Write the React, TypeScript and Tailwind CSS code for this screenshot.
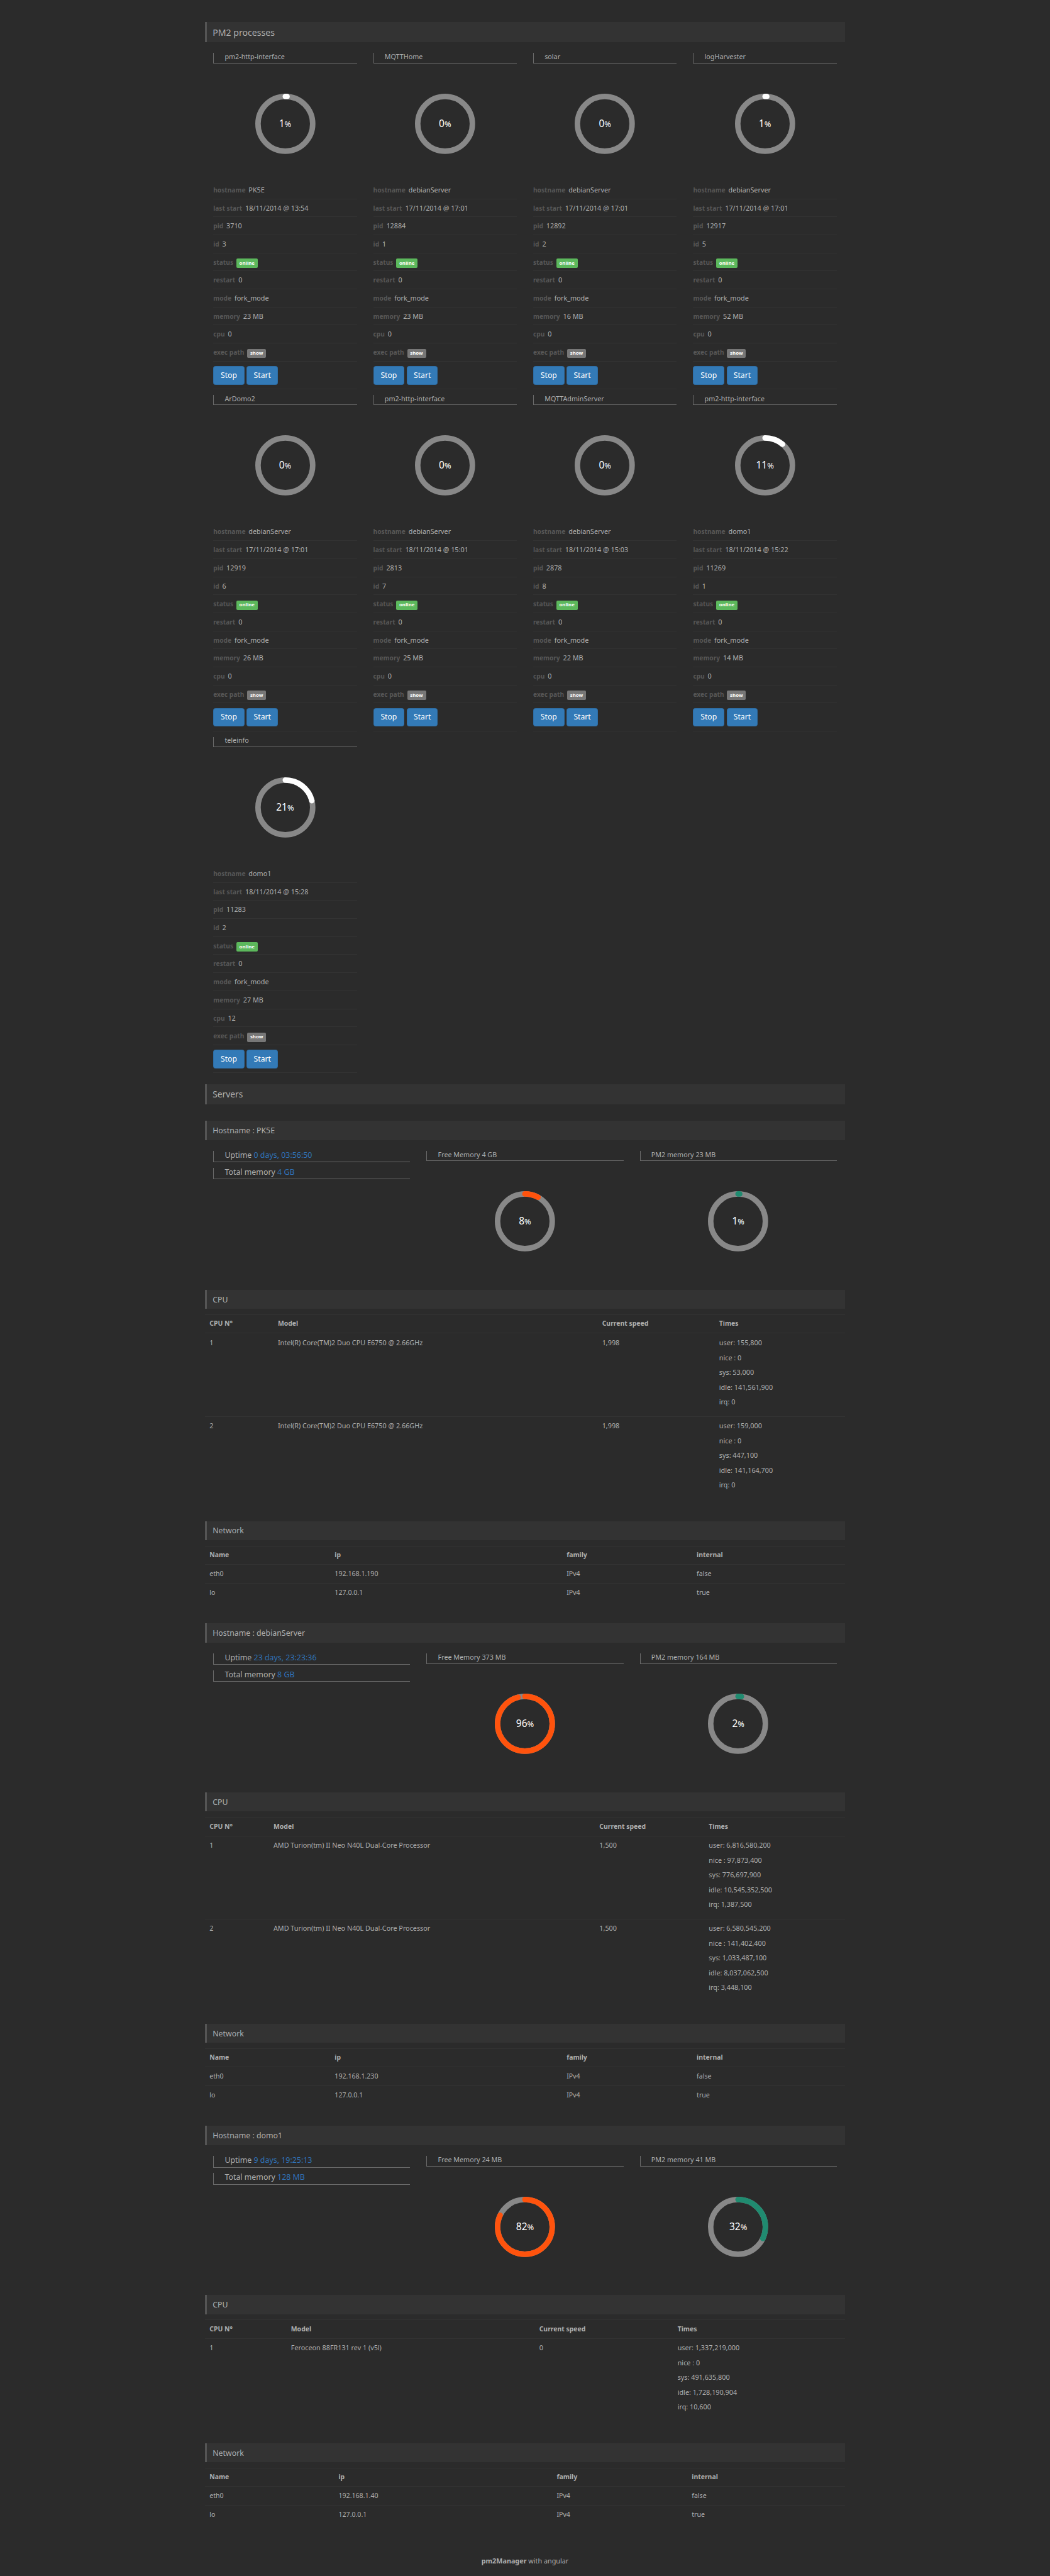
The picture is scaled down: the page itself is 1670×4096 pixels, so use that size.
import type { ReactNode } from "react";

type Proc = {
  name: string;
  percent: number;
  host: string;
  start: string;
  pid: string;
  id: string;
  memory: string;
  cpu: string;
};

type Server = {
  host: string;
  uptime: string;
  total: string;
  free: string;
  freePercent: number;
  pm2: string;
  pm2Percent: number;
  cpuCols: number[];
  cpus: { model: string; speed: string; times: string[] }[];
  netCols: number[];
  ip: string;
};

const processes: Proc[] = [
  { name: "pm2-http-interface", percent: 1, host: "PK5E", start: "18/11/2014 @ 13:54", pid: "3710", id: "3", memory: "23 MB", cpu: "0" },
  { name: "MQTTHome", percent: 0, host: "debianServer", start: "17/11/2014 @ 17:01", pid: "12884", id: "1", memory: "23 MB", cpu: "0" },
  { name: "solar", percent: 0, host: "debianServer", start: "17/11/2014 @ 17:01", pid: "12892", id: "2", memory: "16 MB", cpu: "0" },
  { name: "logHarvester", percent: 1, host: "debianServer", start: "17/11/2014 @ 17:01", pid: "12917", id: "5", memory: "52 MB", cpu: "0" },
  { name: "ArDomo2", percent: 0, host: "debianServer", start: "17/11/2014 @ 17:01", pid: "12919", id: "6", memory: "26 MB", cpu: "0" },
  { name: "pm2-http-interface", percent: 0, host: "debianServer", start: "18/11/2014 @ 15:01", pid: "2813", id: "7", memory: "25 MB", cpu: "0" },
  { name: "MQTTAdminServer", percent: 0, host: "debianServer", start: "18/11/2014 @ 15:03", pid: "2878", id: "8", memory: "22 MB", cpu: "0" },
  { name: "pm2-http-interface", percent: 11, host: "domo1", start: "18/11/2014 @ 15:22", pid: "11269", id: "1", memory: "14 MB", cpu: "0" },
  { name: "teleinfo", percent: 21, host: "domo1", start: "18/11/2014 @ 15:28", pid: "11283", id: "2", memory: "27 MB", cpu: "12" },
];

// Column widths are shares of the 1170-unit table width.
const servers: Server[] = [
  {
    host: "PK5E",
    uptime: "0 days, 03:56:50",
    total: "4 GB",
    free: "4 GB",
    freePercent: 8,
    pm2: "23 MB",
    pm2Percent: 1,
    cpuCols: [125, 593, 214, 238],
    cpus: [
      { model: "Intel(R) Core(TM)2 Duo CPU E6750 @ 2.66GHz", speed: "1,998", times: ["user: 155,800", "nice : 0", "sys: 53,000", "idle: 141,561,900", "irq: 0"] },
      { model: "Intel(R) Core(TM)2 Duo CPU E6750 @ 2.66GHz", speed: "1,998", times: ["user: 159,000", "nice : 0", "sys: 447,100", "idle: 141,164,700", "irq: 0"] },
    ],
    netCols: [229, 424, 238, 279],
    ip: "192.168.1.190",
  },
  {
    host: "debianServer",
    uptime: "23 days, 23:23:36",
    total: "8 GB",
    free: "373 MB",
    freePercent: 96,
    pm2: "164 MB",
    pm2Percent: 2,
    cpuCols: [117, 596, 200, 257],
    cpus: [
      { model: "AMD Turion(tm) II Neo N40L Dual-Core Processor", speed: "1,500", times: ["user: 6,816,580,200", "nice : 97,873,400", "sys: 776,697,900", "idle: 10,545,352,500", "irq: 1,387,500"] },
      { model: "AMD Turion(tm) II Neo N40L Dual-Core Processor", speed: "1,500", times: ["user: 6,580,545,200", "nice : 141,402,400", "sys: 1,033,487,100", "idle: 8,037,062,500", "irq: 3,448,100"] },
    ],
    netCols: [229, 424, 238, 279],
    ip: "192.168.1.230",
  },
  {
    host: "domo1",
    uptime: "9 days, 19:25:13",
    total: "128 MB",
    free: "24 MB",
    freePercent: 82,
    pm2: "41 MB",
    pm2Percent: 32,
    cpuCols: [149, 454, 253, 314],
    cpus: [
      { model: "Feroceon 88FR131 rev 1 (v5l)", speed: "0", times: ["user: 1,337,219,000", "nice : 0", "sys: 491,635,800", "idle: 1,728,190,904", "irq: 10,600"] },
    ],
    netCols: [236, 399, 247, 288],
    ip: "192.168.1.40",
  },
];

function Bar({ children }: { children: ReactNode }) {
  return (
    <h2 className="flex h-[30.4px] items-center border-l-[3px] border-[#555] bg-[#333] pt-[1.6px] pl-[9px] text-[12.35px]">
      {children}
    </h2>
  );
}

function Title({ children }: { children: ReactNode }) {
  return (
    <h3 className="flex h-[16.5px] items-center border-b border-l border-[#6a6a6a] pb-[3px] pl-[17.2px] text-[10.75px] leading-none whitespace-pre">
      {children}
    </h3>
  );
}

function Fact({ label, value }: { label: string; value: string }) {
  return (
    <h3 className="flex h-[18.3px] items-center border-b border-l border-[#6a6a6a] pb-[2.8px] pl-[17.2px] text-[12.4px] leading-none whitespace-pre">
      {label} <span className="text-[#3072b8]">{value}</span>
    </h3>
  );
}

function Ring({ percent, color }: { percent: number; color: string }) {
  return (
    <div className="relative mx-auto mt-[47.8px] size-[95.7px]">
      <svg viewBox="0 0 110 110" className="size-full overflow-visible" fill="none" strokeWidth="10">
        <circle cx="55" cy="55" r="50" stroke="#888" />
        {percent > 0 && (
          <circle
            cx="55"
            cy="55"
            r="50"
            stroke={color}
            strokeLinecap="round"
            pathLength="100"
            strokeDasharray={`${percent} 100`}
            transform="rotate(-90 55 55)"
          />
        )}
      </svg>
      <div className="absolute inset-0 flex items-center justify-center text-[15.5px] leading-none text-white">
        <span>
          {percent}
          <span className="text-[12.8px]">%</span>
        </span>
      </div>
    </div>
  );
}

function Row({ label, children }: { label: string; children: ReactNode }) {
  return (
    <li className="flex h-[28.7px] items-baseline gap-[4.9px] border-b border-[#333] leading-[28.7px]">
      <b className="text-[10.2px] font-bold text-[#575757]">{label}</b>
      {children}
    </li>
  );
}

function Badge({ children, className }: { children: string; className: string }) {
  return (
    <span className={`flex h-[14.8px] items-center rounded-[2px] px-[4.7px] text-[7.85px] leading-none font-bold text-white ${className}`}>
      {children}
    </span>
  );
}

function Button({ children }: { children: string }) {
  return (
    <button className="flex h-[29.6px] w-[49.6px] items-center justify-center rounded-[3.5px] border border-[#2e6da4] bg-[#337ab7] text-[12.2px] leading-none text-white">
      {children}
    </button>
  );
}

function Card({ p }: { p: Proc }) {
  return (
    <section className="h-[543.6px] px-[13px]">
      <Title>{p.name}</Title>
      <Ring percent={p.percent} color="#fff" />
      <ul className="mt-[43.5px]">
        <Row label="hostname">{p.host}</Row>
        <Row label="last start">{p.start}</Row>
        <Row label="pid">{p.pid}</Row>
        <Row label="id">{p.id}</Row>
        <Row label="status">
          <Badge className="bg-[#5cb85c]">online</Badge>
        </Row>
        <Row label="restart">0</Row>
        <Row label="mode">fork_mode</Row>
        <Row label="memory">{p.memory}</Row>
        <Row label="cpu">{p.cpu}</Row>
        <Row label="exec path">
          <Badge className="bg-[#777]">show</Badge>
        </Row>
        <li className="flex h-[44.4px] gap-[3.7px] border-b border-[#333] pt-[7.4px]">
          <Button>Stop</Button>
          <Button>Start</Button>
        </li>
      </ul>
    </section>
  );
}

function Table({ cols, head, children }: { cols: number[]; head: string[]; children: ReactNode }) {
  return (
    <table className="mt-[8.7px] mb-[34.8px] w-full table-fixed border-separate border-spacing-0">
      <colgroup>
        {cols.map((c, i) => (
          <col key={i} style={{ width: `${(c / 1170) * 100}%` }} />
        ))}
      </colgroup>
      <thead>
        <tr className="h-[29.6px] text-left text-[10.45px]">
          {head.map((h) => (
            <th key={h} className="border-t border-[#333] px-[7px] font-bold">
              {h}
            </th>
          ))}
        </tr>
      </thead>
      <tbody>{children}</tbody>
    </table>
  );
}

function Cell({ children }: { children: ReactNode }) {
  return <td className="border-t border-[#333] px-[7px] pt-[6.6px] align-top leading-[15.6px]">{children}</td>;
}

function ServerBlock({ s }: { s: Server }) {
  return (
    <section>
      <Bar>Hostname : {s.host}</Bar>
      <div className="mt-[17.4px] grid h-[220.9px] grid-cols-3">
        <div className="flex flex-col gap-[8.7px] px-[13px]">
          <Fact label="Uptime" value={s.uptime} />
          <Fact label="Total memory" value={s.total} />
        </div>
        <div className="px-[13px]">
          <Title>Free Memory {s.free}</Title>
          <Ring percent={s.freePercent} color="#ff530d" />
        </div>
        <div className="px-[13px]">
          <Title>PM2 memory {s.pm2}</Title>
          <Ring percent={s.pm2Percent} color="#208b70" />
        </div>
      </div>
      <Bar>CPU</Bar>
      <Table cols={s.cpuCols} head={["CPU N°", "Model", "Current speed", "Times"]}>
        {s.cpus.map((c, i) => (
          <tr key={i} className="h-[132.2px]">
            <Cell>{i + 1}</Cell>
            <Cell>{c.model}</Cell>
            <Cell>{c.speed}</Cell>
            <Cell>
              {c.times.map((t) => (
                <p key={t} className="mb-[7.9px]">
                  {t}
                </p>
              ))}
            </Cell>
          </tr>
        ))}
      </Table>
      <Bar>Network</Bar>
      <Table cols={s.netCols} head={["Name", "ip", "family", "internal"]}>
        {[
          ["eth0", s.ip, "IPv4", "false"],
          ["lo", "127.0.0.1", "IPv4", "true"],
        ].map((r) => (
          <tr key={r[0]} className="h-[29.6px] text-[10.6px]">
            {r.map((v) => (
              <Cell key={v}>{v}</Cell>
            ))}
          </tr>
        ))}
      </Table>
    </section>
  );
}

export default function App() {
  return (
    <div className="h-[4096px] overflow-hidden bg-[#2b2b2b] pt-[34.8px] font-['Noto_Sans',sans-serif] text-[10.8px] text-[#afafaf]">
      <main className="mx-auto w-[1017.6px]">
        <h1 className="flex h-[32.2px] items-center border-l-[3px] border-[#555] bg-[#333] pt-px pl-[9px] text-[14.1px]">
          PM2 processes
        </h1>
        <div className="mt-[17.4px] mb-[8.7px] grid grid-cols-4">
          {processes.map((p, i) => (
            <Card key={i} p={p} />
          ))}
        </div>
        <h1 className="mb-[26.1px] flex h-[32.2px] items-center border-l-[3px] border-[#555] bg-[#333] pt-px pl-[9px] text-[13.8px]">
          Servers
        </h1>
        {servers.map((s) => (
          <ServerBlock key={s.host} s={s} />
        ))}
      </main>
      <footer className="pt-[16.5px] text-center leading-[16px]">
        <b>pm2Manager</b> with angular
      </footer>
    </div>
  );
}
